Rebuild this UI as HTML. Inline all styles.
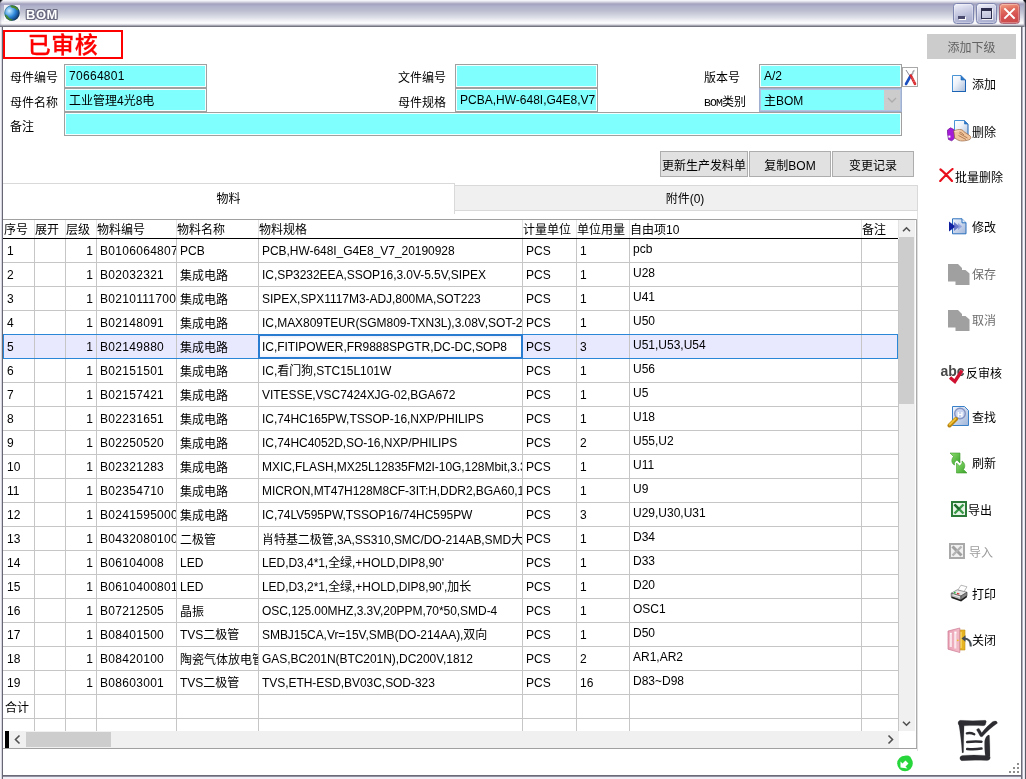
<!DOCTYPE html>
<html lang="zh"><head><meta charset="utf-8"><title>BOM</title>
<style>
*{box-sizing:border-box;margin:0;padding:0}
html,body{width:1026px;height:779px;overflow:hidden;background:#fff}
body{position:relative;font-family:"Liberation Sans","Noto Sans CJK SC",sans-serif;font-size:12px;color:#000;line-height:14px}
.abs,#win *{position:absolute}
#win{will-change:transform;position:absolute;left:0;top:0;width:1026px;height:779px;background:#fff;overflow:hidden}
#tbar{left:0;top:0;width:1026px;height:27px;background:linear-gradient(#f6f8fc 0px,#f2f4f9 .5px,#e0e0ea 1.5px,#c8c8d8 2.5px,#adadc6 3.5px,#a5a5c1 4.5px,#ababc7 5.5px,#b0b2cc 6.5px,#b8bace 9.5px,#c9cbd9 13.5px,#dddfe8 17.5px,#f0f0f5 20.5px,#fbfbfc 22.5px,#f6f6f9 23.5px,#dadae0 24.5px,#a6a6b2 25.5px,#74747e 26.5px,#74747e 27px)}
#bl{left:0;top:27px;width:3px;height:752px;background:linear-gradient(90deg,#f4f4f9 0,#f4f4f9 1px,#d4d4de 1px,#d4d4de 2px,#666674 2px,#666674 3px)}
#br{left:1021px;top:27px;width:5px;height:752px;background:linear-gradient(90deg,#6c6c78 0,#6c6c78 1px,#aeaebb 1px,#aeaebb 2px,#f6f6fc 2px,#f6f6fc 3px,#e6e6ee 3px,#e6e6ee 4px,#5c5c68 4px,#5c5c68 5px)}
#bb{left:0;top:775px;width:1026px;height:4px;background:linear-gradient(#6a6a78 0,#6a6a78 1px,#9090a0 1px,#9090a0 2px,#eeeef6 2px,#f2f2fa 4px)}
#ttl{left:26px;top:7px;font-family:"Liberation Sans",sans-serif;font-weight:bold;font-size:13px;line-height:16px;color:#fff;text-shadow:-1px 0 #6a6a80,1px 0 #6a6a80,0 -1px #6a6a80,0 1px #6a6a80,1px 1px #6a6a80,-1px -1px #6a6a80,1px -1px #6a6a80,-1px 1px #6a6a80;letter-spacing:0.5px}
.wb{top:3px;width:21px;height:21px;border-radius:3.500px;border:1px solid #7e86b0;background:linear-gradient(165deg,#f4f4fc 0,#d4d6ea 30%,#b6bad6 65%,#a6aacc);box-shadow:inset 0 0 0 1px rgba(255,255,255,.3)}
#stamp{-webkit-text-stroke:.3px #f00;left:3px;top:30px;width:120px;height:29px;border:2px solid #f00;color:#f00;font-size:23px;line-height:27px;text-align:center;font-weight:500;letter-spacing:.5px;font-family:"Liberation Sans","Noto Sans CJK SC",sans-serif}
.lb{height:14px;white-space:nowrap}
.fd{height:24px;border:1px solid #a0a0a0;background:#80ffff;box-shadow:inset 0 0 0 1px #f4ffff;padding:4px 0 0 4px;line-height:14px;white-space:nowrap;overflow:hidden}
.btn{height:26px;border:1px solid #adadad;background:#e1e1e1;text-align:center;line-height:14px;padding-top:7px;overflow:hidden;white-space:nowrap}
#grid{left:3px;top:219px;width:916px;height:533px;background:#fff;overflow:hidden}
.gh{left:0;top:0;width:895px;height:20px;border-top:1px solid #a0a0a0;border-bottom:1px solid #000}
.hc{top:3px;height:15px;white-space:nowrap;overflow:hidden}
.gr{left:0;width:895px;height:24px}
.c{top:4px;height:16px;line-height:16px;white-space:nowrap;overflow:hidden;padding-left:3px}
.c2{text-align:right;padding-right:3px}
.c8{top:2px}
.vl{top:20px;width:1px;height:492px;background:#c6c6c6}
.vh{top:1px;width:1px;height:18px;background:#e2e2e2}
.hl{left:0;width:895px;height:1px;background:#c6c6c6}
.rt{white-space:nowrap;height:14px}
.dis{color:#6d6d6d}
.selbg{left:0;top:116px;width:895px;height:23px;background:#e8e8ff}
.editbg{left:255px;top:115px;width:265px;height:25px;background:linear-gradient(#e4e4fa,#fff 5px,#fff 19px,#ececfc)}
.selbd{left:0;top:115px;width:895px;height:25px;border:1px solid #2a86d6}
.editbd{left:255px;top:115px;width:265px;height:25px;border:2px solid #2a7cd0}
.cj{margin-top:1px}
.c3{letter-spacing:.3px}
.c5{letter-spacing:-.05px}

</style></head>
<body>
<div id="win">
<div id="tbar"></div>
<div id="bb"></div><div id="bl"></div><div id="br"></div><i style="left:3px;top:750px;width:915px;height:1px;background:#dedede"></i>
<svg id="globe" style="left:4px;top:5px" width="16" height="16" viewBox="0 0 16 16"><defs><radialGradient id="gg" cx="32%" cy="36%" r="72%"><stop offset="0" stop-color="#d8efff"/><stop offset="0.22" stop-color="#8cc8f4"/><stop offset="0.55" stop-color="#2c86d8"/><stop offset="1" stop-color="#0a2f6a"/></radialGradient><clipPath id="gc"><circle cx="8" cy="8" r="7.700"/></clipPath></defs><rect width="16" height="16" fill="#fff" opacity=".8"/><circle cx="8" cy="8" r="7.700" fill="url(#gg)"/><g clip-path="url(#gc)" fill="#4e8c22"><path d="M6 0c3-.5 7 1 9 4l-2 1.500c-1.500-2-3-2.500-4-2.500-1.500 0-2.500-1-3-3z" opacity=".9"/><path d="M1 9.500c1.500 0 2.500 1 3.500 2.500s2.500 2 4 2.500l-1 2c-3.500 0-6.500-3-6.500-7z" opacity=".85"/></g><circle cx="8" cy="8" r="7.400" fill="none" stroke="#1a4a30" stroke-opacity=".45" stroke-width=".8"/></svg>
<div id="ttl">BOM</div>
<div class="wb" style="left:953px"><i style="left:5px;top:13px;width:7px;height:3px;background:#fff"></i><i style="left:4px;top:12px;width:7px;height:3px;background:#4c4c70"></i></div>
<div class="wb" style="left:976px"><i style="left:4px;top:4px;width:11px;height:11px;border:1px solid #2c2c4c;border-top-width:3px;background:rgba(255,255,255,.15);box-shadow:1px 1px 0 rgba(255,255,255,.8)"></i></div>
<div class="wb" style="left:999px;background:linear-gradient(170deg,#f4a88e 0,#e2705f 28%,#d65252 60%,#c84848);border-color:#b06878"><svg style="left:3px;top:3px" width="13" height="13" viewBox="0 0 13 13"><path d="M2 2l9 9M11 2l-9 9" stroke="#fff" stroke-width="1.900" stroke-linecap="square"/></svg></div>
<i style="left:1023px;top:0;width:3px;height:27px;background:linear-gradient(90deg,rgba(160,160,176,.2) 0,rgba(160,160,176,.2) 1px,#a0a0ae 1px,#a0a0ae 2px,#484856 2px)"></i><i style="left:1023px;top:0;width:3px;height:3px;background:linear-gradient(225deg,#101018 35%,rgba(0,0,0,0) 70%)"></i>
<i style="left:0;top:0;width:2px;height:27px;background:linear-gradient(90deg,rgba(120,120,140,.35),rgba(255,255,255,0))"></i><i style="left:0;top:0;width:3px;height:3px;background:linear-gradient(135deg,#101018 25%,rgba(0,0,0,0) 60%)"></i>
<div id="stamp">已审核</div>
<div class="lb" style="left:10px;top:71px">母件编号</div>
<div class="lb" style="left:10px;top:96px">母件名称</div>
<div class="lb" style="left:10px;top:120px">备注</div>
<div class="lb" style="left:398px;top:71px">文件编号</div>
<div class="lb" style="left:398px;top:96px">母件规格</div>
<div class="lb" style="left:704px;top:71px">版本号</div>
<div class="lb" style="left:704px;top:95px"><span style="position:static;font-family:'Liberation Mono',monospace;font-size:11.500px;letter-spacing:-.9px">BOM</span>类别</div>
<div class="fd" style="left:64px;top:64px;width:143px;letter-spacing:.3px">70664801</div>
<div class="fd" style="left:64px;top:88px;width:143px;padding-top:5px">工业管理4光8电</div>
<div class="fd" style="left:64px;top:112px;width:838px"></div>
<div class="fd" style="left:455px;top:64px;width:143px"></div>
<div class="fd" style="left:455px;top:88px;width:143px">PCBA,HW-648I,G4E8,V7</div>
<div class="fd" style="left:759px;top:64px;width:143px">A/2</div>
<div class="fd" style="left:759px;top:88px;width:143px;border-color:#9fb0d0;box-shadow:inset 0 0 0 1px #b4c4e0;padding-top:5px">主BOM</div>
<div style="left:884px;top:90px;width:16px;height:20px;background:#ccc"></div><svg style="left:887px;top:97px" width="10" height="7" viewBox="0 0 10 7"><path d="M1 1l4 4 4-4" fill="none" stroke="#acacac" stroke-width="1.300"/></svg>
<div style="left:902px;top:67px;width:16px;height:20px;border:1px solid #a8a8a8;background:#fff"></div>
<svg style="left:903px;top:68px" width="15" height="18" viewBox="0 0 15 18"><path d="M3 2l4.500 7" stroke="#8a8a9a" stroke-width="1"/><path d="M7.500 8L3 16" stroke="#1c4fc0" stroke-width="2.600" stroke-linecap="round"/><path d="M11.500 2.500c-1.500.5-2 2-1.500 3.200" stroke="#a0a0a8" stroke-width="1.400" fill="none"/><path d="M9.500 5.500l-1.500 2" stroke="#909098" stroke-width="1.400"/><path d="M7.800 7.500L12 15.800" stroke="#d8282c" stroke-width="2.600" stroke-linecap="round"/><path d="M9 9.500l2.800 5.800" stroke="#f4b0b0" stroke-width=".7" stroke-dasharray="1 1"/></svg>
<div class="btn" style="left:660px;top:151px;width:88px">更新生产发料单</div>
<div class="btn" style="left:749px;top:151px;width:82px">复制BOM</div>
<div class="btn" style="left:832px;top:151px;width:82px">变更记录</div>
<div id="tab1" style="left:3px;top:183px;width:452px;height:31px;border-top:1px solid #d9d9d9;border-right:1px solid #d9d9d9;text-align:center;line-height:31px">物料</div>
<div id="tab2" style="left:455px;top:185px;width:463px;height:26px;background:#f0f0f0;text-align:center;line-height:27px;border:1px solid #d9d9d9;border-left:none;padding-right:2px">附件(0)</div><i style="left:917px;top:211px;width:1px;height:8px;background:#e2e2e2"></i>
<div id="grid">
<div class="selbg"></div><div class="editbg"></div><div class="gh"><span class="hc" style="left:1px;width:30px">序号</span><span class="hc" style="left:32px;width:30px">展开</span><span class="hc" style="left:63px;width:30px">层级</span><span class="hc" style="left:94px;width:79px">物料编号</span><span class="hc" style="left:174px;width:81px">物料名称</span><span class="hc" style="left:256px;width:263px">物料规格</span><span class="hc" style="left:520px;width:53px">计量单位</span><span class="hc" style="left:574px;width:52px">单位用量</span><span class="hc" style="left:627px;width:231px">自由项10</span><span class="hc" style="left:859px;width:36px">备注</span></div>
<div class="gr" style="top:20px"><span class="c c0" style="left:1px;width:30px">1</span><span class="c c1" style="left:32px;width:30px"></span><span class="c c2" style="left:63px;width:30px">1</span><span class="c c3" style="left:94px;width:79px">B0106064807</span><span class="c c4" style="left:174px;width:81px">PCB</span><span class="c c5" style="left:256px;width:263px">PCB,HW-648I_G4E8_V7_20190928</span><span class="c c6" style="left:520px;width:53px">PCS</span><span class="c c7" style="left:574px;width:52px">1</span><span class="c c8" style="left:627px;width:231px">pcb</span><span class="c c9" style="left:859px;width:36px"></span></div>
<div class="gr" style="top:44px"><span class="c c0" style="left:1px;width:30px">2</span><span class="c c1" style="left:32px;width:30px"></span><span class="c c2" style="left:63px;width:30px">1</span><span class="c c3" style="left:94px;width:79px">B02032321</span><span class="c c4 cj" style="left:174px;width:81px">集成电路</span><span class="c c5" style="left:256px;width:263px">IC,SP3232EEA,SSOP16,3.0V-5.5V,SIPEX</span><span class="c c6" style="left:520px;width:53px">PCS</span><span class="c c7" style="left:574px;width:52px">1</span><span class="c c8" style="left:627px;width:231px">U28</span><span class="c c9" style="left:859px;width:36px"></span></div>
<div class="gr" style="top:68px"><span class="c c0" style="left:1px;width:30px">3</span><span class="c c1" style="left:32px;width:30px"></span><span class="c c2" style="left:63px;width:30px">1</span><span class="c c3" style="left:94px;width:79px">B0210111700</span><span class="c c4 cj" style="left:174px;width:81px">集成电路</span><span class="c c5" style="left:256px;width:263px">SIPEX,SPX1117M3-ADJ,800MA,SOT223</span><span class="c c6" style="left:520px;width:53px">PCS</span><span class="c c7" style="left:574px;width:52px">1</span><span class="c c8" style="left:627px;width:231px">U41</span><span class="c c9" style="left:859px;width:36px"></span></div>
<div class="gr" style="top:92px"><span class="c c0" style="left:1px;width:30px">4</span><span class="c c1" style="left:32px;width:30px"></span><span class="c c2" style="left:63px;width:30px">1</span><span class="c c3" style="left:94px;width:79px">B02148091</span><span class="c c4 cj" style="left:174px;width:81px">集成电路</span><span class="c c5" style="left:256px;width:263px">IC,MAX809TEUR(SGM809-TXN3L),3.08V,SOT-23</span><span class="c c6" style="left:520px;width:53px">PCS</span><span class="c c7" style="left:574px;width:52px">1</span><span class="c c8" style="left:627px;width:231px">U50</span><span class="c c9" style="left:859px;width:36px"></span></div>
<div class="gr" style="top:116px"><span class="c c0" style="left:1px;width:30px">5</span><span class="c c1" style="left:32px;width:30px"></span><span class="c c2" style="left:63px;width:30px">1</span><span class="c c3" style="left:94px;width:79px">B02149880</span><span class="c c4 cj" style="left:174px;width:81px">集成电路</span><span class="c c5" style="left:256px;width:263px">IC,FITIPOWER,FR9888SPGTR,DC-DC,SOP8</span><span class="c c6" style="left:520px;width:53px">PCS</span><span class="c c7" style="left:574px;width:52px">3</span><span class="c c8" style="left:627px;width:231px">U51,U53,U54</span><span class="c c9" style="left:859px;width:36px"></span></div>
<div class="gr" style="top:140px"><span class="c c0" style="left:1px;width:30px">6</span><span class="c c1" style="left:32px;width:30px"></span><span class="c c2" style="left:63px;width:30px">1</span><span class="c c3" style="left:94px;width:79px">B02151501</span><span class="c c4 cj" style="left:174px;width:81px">集成电路</span><span class="c c5" style="left:256px;width:263px">IC,看门狗,STC15L101W</span><span class="c c6" style="left:520px;width:53px">PCS</span><span class="c c7" style="left:574px;width:52px">1</span><span class="c c8" style="left:627px;width:231px">U56</span><span class="c c9" style="left:859px;width:36px"></span></div>
<div class="gr" style="top:164px"><span class="c c0" style="left:1px;width:30px">7</span><span class="c c1" style="left:32px;width:30px"></span><span class="c c2" style="left:63px;width:30px">1</span><span class="c c3" style="left:94px;width:79px">B02157421</span><span class="c c4 cj" style="left:174px;width:81px">集成电路</span><span class="c c5" style="left:256px;width:263px">VITESSE,VSC7424XJG-02,BGA672</span><span class="c c6" style="left:520px;width:53px">PCS</span><span class="c c7" style="left:574px;width:52px">1</span><span class="c c8" style="left:627px;width:231px">U5</span><span class="c c9" style="left:859px;width:36px"></span></div>
<div class="gr" style="top:188px"><span class="c c0" style="left:1px;width:30px">8</span><span class="c c1" style="left:32px;width:30px"></span><span class="c c2" style="left:63px;width:30px">1</span><span class="c c3" style="left:94px;width:79px">B02231651</span><span class="c c4 cj" style="left:174px;width:81px">集成电路</span><span class="c c5" style="left:256px;width:263px">IC,74HC165PW,TSSOP-16,NXP/PHILIPS</span><span class="c c6" style="left:520px;width:53px">PCS</span><span class="c c7" style="left:574px;width:52px">1</span><span class="c c8" style="left:627px;width:231px">U18</span><span class="c c9" style="left:859px;width:36px"></span></div>
<div class="gr" style="top:212px"><span class="c c0" style="left:1px;width:30px">9</span><span class="c c1" style="left:32px;width:30px"></span><span class="c c2" style="left:63px;width:30px">1</span><span class="c c3" style="left:94px;width:79px">B02250520</span><span class="c c4 cj" style="left:174px;width:81px">集成电路</span><span class="c c5" style="left:256px;width:263px">IC,74HC4052D,SO-16,NXP/PHILIPS</span><span class="c c6" style="left:520px;width:53px">PCS</span><span class="c c7" style="left:574px;width:52px">2</span><span class="c c8" style="left:627px;width:231px">U55,U2</span><span class="c c9" style="left:859px;width:36px"></span></div>
<div class="gr" style="top:236px"><span class="c c0" style="left:1px;width:30px">10</span><span class="c c1" style="left:32px;width:30px"></span><span class="c c2" style="left:63px;width:30px">1</span><span class="c c3" style="left:94px;width:79px">B02321283</span><span class="c c4 cj" style="left:174px;width:81px">集成电路</span><span class="c c5" style="left:256px;width:263px">MXIC,FLASH,MX25L12835FM2I-10G,128Mbit,3.3V</span><span class="c c6" style="left:520px;width:53px">PCS</span><span class="c c7" style="left:574px;width:52px">1</span><span class="c c8" style="left:627px;width:231px">U11</span><span class="c c9" style="left:859px;width:36px"></span></div>
<div class="gr" style="top:260px"><span class="c c0" style="left:1px;width:30px">11</span><span class="c c1" style="left:32px;width:30px"></span><span class="c c2" style="left:63px;width:30px">1</span><span class="c c3" style="left:94px;width:79px">B02354710</span><span class="c c4 cj" style="left:174px;width:81px">集成电路</span><span class="c c5" style="left:256px;width:263px">MICRON,MT47H128M8CF-3IT:H,DDR2,BGA60,1Gb</span><span class="c c6" style="left:520px;width:53px">PCS</span><span class="c c7" style="left:574px;width:52px">1</span><span class="c c8" style="left:627px;width:231px">U9</span><span class="c c9" style="left:859px;width:36px"></span></div>
<div class="gr" style="top:284px"><span class="c c0" style="left:1px;width:30px">12</span><span class="c c1" style="left:32px;width:30px"></span><span class="c c2" style="left:63px;width:30px">1</span><span class="c c3" style="left:94px;width:79px">B0241595000</span><span class="c c4 cj" style="left:174px;width:81px">集成电路</span><span class="c c5" style="left:256px;width:263px">IC,74LV595PW,TSSOP16/74HC595PW</span><span class="c c6" style="left:520px;width:53px">PCS</span><span class="c c7" style="left:574px;width:52px">3</span><span class="c c8" style="left:627px;width:231px">U29,U30,U31</span><span class="c c9" style="left:859px;width:36px"></span></div>
<div class="gr" style="top:308px"><span class="c c0" style="left:1px;width:30px">13</span><span class="c c1" style="left:32px;width:30px"></span><span class="c c2" style="left:63px;width:30px">1</span><span class="c c3" style="left:94px;width:79px">B0432080100</span><span class="c c4 cj" style="left:174px;width:81px">二极管</span><span class="c c5 cj" style="left:256px;width:263px">肖特基二极管,3A,SS310,SMC/DO-214AB,SMD大</span><span class="c c6" style="left:520px;width:53px">PCS</span><span class="c c7" style="left:574px;width:52px">1</span><span class="c c8" style="left:627px;width:231px">D34</span><span class="c c9" style="left:859px;width:36px"></span></div>
<div class="gr" style="top:332px"><span class="c c0" style="left:1px;width:30px">14</span><span class="c c1" style="left:32px;width:30px"></span><span class="c c2" style="left:63px;width:30px">1</span><span class="c c3" style="left:94px;width:79px">B06104008</span><span class="c c4" style="left:174px;width:81px">LED</span><span class="c c5" style="left:256px;width:263px">LED,D3,4*1,全绿,+HOLD,DIP8,90'</span><span class="c c6" style="left:520px;width:53px">PCS</span><span class="c c7" style="left:574px;width:52px">1</span><span class="c c8" style="left:627px;width:231px">D33</span><span class="c c9" style="left:859px;width:36px"></span></div>
<div class="gr" style="top:356px"><span class="c c0" style="left:1px;width:30px">15</span><span class="c c1" style="left:32px;width:30px"></span><span class="c c2" style="left:63px;width:30px">1</span><span class="c c3" style="left:94px;width:79px">B0610400801</span><span class="c c4" style="left:174px;width:81px">LED</span><span class="c c5" style="left:256px;width:263px">LED,D3,2*1,全绿,+HOLD,DIP8,90',加长</span><span class="c c6" style="left:520px;width:53px">PCS</span><span class="c c7" style="left:574px;width:52px">1</span><span class="c c8" style="left:627px;width:231px">D20</span><span class="c c9" style="left:859px;width:36px"></span></div>
<div class="gr" style="top:380px"><span class="c c0" style="left:1px;width:30px">16</span><span class="c c1" style="left:32px;width:30px"></span><span class="c c2" style="left:63px;width:30px">1</span><span class="c c3" style="left:94px;width:79px">B07212505</span><span class="c c4 cj" style="left:174px;width:81px">晶振</span><span class="c c5" style="left:256px;width:263px">OSC,125.00MHZ,3.3V,20PPM,70*50,SMD-4</span><span class="c c6" style="left:520px;width:53px">PCS</span><span class="c c7" style="left:574px;width:52px">1</span><span class="c c8" style="left:627px;width:231px">OSC1</span><span class="c c9" style="left:859px;width:36px"></span></div>
<div class="gr" style="top:404px"><span class="c c0" style="left:1px;width:30px">17</span><span class="c c1" style="left:32px;width:30px"></span><span class="c c2" style="left:63px;width:30px">1</span><span class="c c3" style="left:94px;width:79px">B08401500</span><span class="c c4" style="left:174px;width:81px">TVS二极管</span><span class="c c5" style="left:256px;width:263px">SMBJ15CA,Vr=15V,SMB(DO-214AA),双向</span><span class="c c6" style="left:520px;width:53px">PCS</span><span class="c c7" style="left:574px;width:52px">1</span><span class="c c8" style="left:627px;width:231px">D50</span><span class="c c9" style="left:859px;width:36px"></span></div>
<div class="gr" style="top:428px"><span class="c c0" style="left:1px;width:30px">18</span><span class="c c1" style="left:32px;width:30px"></span><span class="c c2" style="left:63px;width:30px">1</span><span class="c c3" style="left:94px;width:79px">B08420100</span><span class="c c4 cj" style="left:174px;width:81px">陶瓷气体放电管</span><span class="c c5" style="left:256px;width:263px">GAS,BC201N(BTC201N),DC200V,1812</span><span class="c c6" style="left:520px;width:53px">PCS</span><span class="c c7" style="left:574px;width:52px">2</span><span class="c c8" style="left:627px;width:231px">AR1,AR2</span><span class="c c9" style="left:859px;width:36px"></span></div>
<div class="gr" style="top:452px"><span class="c c0" style="left:1px;width:30px">19</span><span class="c c1" style="left:32px;width:30px"></span><span class="c c2" style="left:63px;width:30px">1</span><span class="c c3" style="left:94px;width:79px">B08603001</span><span class="c c4" style="left:174px;width:81px">TVS二极管</span><span class="c c5" style="left:256px;width:263px">TVS,ETH-ESD,BV03C,SOD-323</span><span class="c c6" style="left:520px;width:53px">PCS</span><span class="c c7" style="left:574px;width:52px">16</span><span class="c c8" style="left:627px;width:231px">D83~D98</span><span class="c c9" style="left:859px;width:36px"></span></div>
<div class="gr" style="top:476px"><span class="c c0 cj" style="left:-1px;width:32px">合计</span></div>
<i class="vl" style="left:31px"></i><i class="vh" style="left:31px"></i><i class="vl" style="left:62px"></i><i class="vh" style="left:62px"></i><i class="vl" style="left:93px"></i><i class="vh" style="left:93px"></i><i class="vl" style="left:173px"></i><i class="vh" style="left:173px"></i><i class="vl" style="left:255px"></i><i class="vh" style="left:255px"></i><i class="vl" style="left:519px"></i><i class="vh" style="left:519px"></i><i class="vl" style="left:573px"></i><i class="vh" style="left:573px"></i><i class="vl" style="left:626px"></i><i class="vh" style="left:626px"></i><i class="vl" style="left:858px"></i><i class="vh" style="left:858px"></i><i class="vl" style="left:895px"></i><i class="vh" style="left:895px"></i>
<i class="hl" style="top:43px"></i><i class="hl" style="top:67px"></i><i class="hl" style="top:91px"></i><i class="hl" style="top:115px"></i><i class="hl" style="top:139px"></i><i class="hl" style="top:163px"></i><i class="hl" style="top:187px"></i><i class="hl" style="top:211px"></i><i class="hl" style="top:235px"></i><i class="hl" style="top:259px"></i><i class="hl" style="top:283px"></i><i class="hl" style="top:307px"></i><i class="hl" style="top:331px"></i><i class="hl" style="top:355px"></i><i class="hl" style="top:379px"></i><i class="hl" style="top:403px"></i><i class="hl" style="top:427px"></i><i class="hl" style="top:451px"></i><i class="hl" style="top:475px"></i><i class="hl" style="top:499px"></i>
<div class="selbd"></div><div class="editbd"></div>
<div id="vsb" style="left:896px;top:1px;width:16px;height:511px;background:#f0f0f0"></div>
<div style="left:896px;top:18px;width:15px;height:167px;background:#cdcdcd"></div>
<svg style="left:898px;top:6px" width="11" height="8" viewBox="0 0 11 8"><path d="M2 6.300l3.500-3.500 3.500 3.500" fill="none" stroke="#505050" stroke-width="1.600"/></svg>
<svg style="left:898px;top:501px" width="11" height="8" viewBox="0 0 11 8"><path d="M2 1.700l3.500 3.500 3.500-3.500" fill="none" stroke="#505050" stroke-width="1.600"/></svg>
<div id="hsb" style="left:6px;top:512px;width:890px;height:17px;background:#f0f0f0"></div>
<div style="left:2px;top:512px;width:4px;height:17px;background:#000"></div>
<div style="left:23px;top:513px;width:85px;height:15px;background:#cdcdcd"></div>
<svg style="left:10px;top:515px" width="8" height="11" viewBox="0 0 8 11"><path d="M6.500 1.500l-4 4 4 4" fill="none" stroke="#505050" stroke-width="1.600"/></svg>
<svg style="left:884px;top:515px" width="8" height="11" viewBox="0 0 8 11"><path d="M1.500 1.500l4 4-4 4" fill="none" stroke="#505050" stroke-width="1.600"/></svg>
<i style="left:0;top:0;width:914px;height:1px;background:#a0a0a0"></i><i style="left:913px;top:0;width:1px;height:530px;background:#ababab"></i><i style="left:914px;top:0;width:1px;height:532px;background:#dedede"></i><i style="left:0;top:529px;width:914px;height:1px;background:#a0a0a0"></i>
</div>
<div class="btn dis" style="left:927px;top:34px;width:89px;height:25px;background:#ccc;border-color:#ccc;padding-top:6px;color:#626262">添加下级</div>
<!-- add -->
<svg style="left:951px;top:74px" width="16" height="19" viewBox="0 0 16 19"><defs><linearGradient id="dg" x1="0" y1="0" x2="1" y2="1"><stop offset="0" stop-color="#ffffff"/><stop offset="0.4" stop-color="#eef3fa"/><stop offset="1" stop-color="#a9bcd8"/></linearGradient></defs><path d="M1.500 1.500h8.500l4.500 4.500v11.500h-13z" fill="url(#dg)"/><path d="M1.500 17.500v-16h8.500" fill="none" stroke="#4a94d6"/><path d="M1 17.500h14M14.500 17.500v-11.500" fill="none" stroke="#1c62b4"/><path d="M10 1.500v4.500h4.500z" fill="#2b7ccc" stroke="#1c62b4" stroke-width=".6"/></svg>
<div class="rt" style="left:972px;top:78px">添加</div>
<!-- delete -->
<svg style="left:946px;top:119px" width="26" height="24" viewBox="0 0 26 24"><path d="M8.500 1.500h10l3.500 3.500v13.500h-13.500z" fill="url(#dg)"/><path d="M8.500 18v-16.500h10" fill="none" stroke="#4a94d6"/><path d="M22 18.500v-13.500" fill="none" stroke="#1c62b4"/><path d="M18.500 1.500v3.500h3.500z" fill="#2b7ccc" stroke="#1c62b4" stroke-width=".6"/><path d="M1.500 11l3-2.200 3.300 1.700 1 8.500-3 2.800-3.300-1.300-1-6z" fill="#a41cd8" stroke="#6a1090" stroke-width=".7"/><rect x="2.400" y="16.600" width="2" height="2" fill="#fff"/><path d="M7.800 11.800c2-.8 5-1.400 7.500-1.200 1.200.3 2 1 2.500 2l6.200 4.200c1 1 1 2.600 0 3.500-1.500 1-3.500 1.200-5.500 1.500-2.500.4-5 .2-7-1l-2.800-1.800z" fill="#f0c49c" stroke="#9a6844" stroke-width=".7"/><path d="M13 12.500c2 .8 3.500 2 5 3.500M13.500 14.500l8 4.500M12.500 16.500l7.500 4" stroke="#a06a40" stroke-width=".8" fill="none"/><path d="M8.500 12.500c2-.5 4-.8 6-.5" stroke="#fbe4cc" stroke-width="1" fill="none"/></svg>
<div class="rt" style="left:972px;top:126px">删除</div>
<!-- batch delete -->
<svg style="left:939px;top:168px" width="15" height="14" viewBox="0 0 15 14"><path d="M1.5 1.5C5 4 9 8.5 13 13M13.5 1C9 4.5 5 9 1.2 13" stroke="#e8101c" stroke-width="2.2" stroke-linecap="round" fill="none"/></svg>
<div class="rt" style="left:955px;top:171px">批量删除</div>
<!-- modify -->
<svg style="left:948px;top:218px" width="19" height="17" viewBox="0 0 19 17"><defs><linearGradient id="dg2" x1="0" y1="0" x2="1" y2="1"><stop offset="0" stop-color="#f4f8ff"/><stop offset="1" stop-color="#9fb4d8"/></linearGradient></defs><path d="M4.5 .8h9.5l4 4v11h-13.5z" fill="url(#dg2)" stroke="#2a6fbd"/><path d="M14 .8v4h4" fill="#e6eefa" stroke="#2a6fbd"/><path d="M1 3.5l6.5 5-6.5 5z" fill="#1020a0"/><path d="M6 4l5.5 4.5L6 13z" fill="#5060c0" opacity=".8"/><path d="M10 5l4 3.5-4 3.5z" fill="#8090d8" opacity=".7"/></svg>
<div class="rt" style="left:972px;top:221px">修改</div>
<!-- save (disabled) -->
<svg style="left:947px;top:263px" width="24" height="23" viewBox="0 0 24 23"><path d="M1 1h10l4 4v13.500h-14z" fill="#a0a0a0"/><path d="M8.500 7h10l4 3.500v11.500h-14z" fill="#a0a0a0"/></svg>
<div class="rt dis" style="left:972px;top:268px">保存</div>
<svg style="left:947px;top:309px" width="24" height="23" viewBox="0 0 24 23"><path d="M1 1h10l4 4v13.500h-14z" fill="#a0a0a0"/><path d="M8.500 7h10l4 3.500v11.500h-14z" fill="#a0a0a0"/></svg>
<div class="rt dis" style="left:972px;top:314px">取消</div>
<!-- unaudit -->
<svg style="left:940px;top:362px" width="27" height="22" viewBox="0 0 27 22"><text x="0.500" y="14" font-family="Liberation Sans,sans-serif" font-weight="bold" font-size="14" fill="#484848">abc</text><path d="M10 15.500l4.800 4L22 8.500" stroke="#d01030" stroke-width="3.300" fill="none" stroke-linejoin="miter"/></svg>
<div class="rt" style="left:966px;top:367px">反审核</div>
<!-- find -->
<svg style="left:946px;top:405px" width="24" height="23" viewBox="0 0 24 23"><path d="M6.500 1.500h12l4 4v15h-16z" fill="url(#dg2)" stroke="#3a80c8"/><circle cx="14" cy="8.600" r="5.300" fill="#c8d4f0" stroke="#8090c0" stroke-width="1.400" opacity=".95"/><text x="11.300" y="11.500" font-family="Liberation Sans,sans-serif" font-weight="bold" font-size="8" fill="#fff">H</text><path d="M10 14L3.500 20.500" stroke="#b88410" stroke-width="4" stroke-linecap="round"/><path d="M9.600 13.600L3.600 19.600" stroke="#f2c436" stroke-width="1.800" stroke-linecap="round"/></svg>
<div class="rt" style="left:972px;top:411px">查找</div>
<!-- refresh -->
<svg style="left:949px;top:452px" width="19" height="22" viewBox="0 0 19 22"><defs><linearGradient id="gr1" x1="0" y1="0" x2="1" y2="1"><stop offset="0" stop-color="#8fe070"/><stop offset="1" stop-color="#38a028"/></linearGradient></defs><path d="M1 1h10v10l-3-3c-2 1-3 3-2.500 5C3 12 1.500 8 4.500 4.500z" fill="url(#gr1)" stroke="#3c9a2c" stroke-width=".6"/><path d="M18 21h-10.500v-10l3 3c2-1 3-3 2.500-5 2.500 1.500 4 5 1.500 8.500z" fill="url(#gr1)" stroke="#3c9a2c" stroke-width=".6"/></svg>
<div class="rt" style="left:972px;top:457px">刷新</div>
<!-- export -->
<svg style="left:951px;top:501px" width="16" height="16" viewBox="0 0 16 16"><rect x="1" y="1" width="14" height="14" fill="#e8f4e8" stroke="#2c7a38" stroke-width="2"/><path d="M3.500 3.500l9 9M12.500 3.500l-9 9" stroke="#3a9a48" stroke-width="2.400"/><path d="M3.500 3.500l5 5" stroke="#1e6a2c" stroke-width="2.400"/></svg>
<div class="rt" style="left:968px;top:504px">导出</div>
<!-- import (disabled) -->
<svg style="left:949px;top:543px" width="16" height="16" viewBox="0 0 16 16"><rect x="1" y="1" width="14" height="14" fill="#f0f0f0" stroke="#a9a9a9" stroke-width="2"/><path d="M3.500 3.500l9 9" stroke="#a0a0a0" stroke-width="3"/><path d="M12.500 3.500l-9 9" stroke="#b4b4b4" stroke-width="2.400"/></svg>
<div class="rt" style="left:969px;top:546px;color:#9c9c9c">导入</div>
<!-- print -->
<svg style="left:950px;top:584px" width="18" height="18" viewBox="0 0 18 18"><path d="M7.500 6.500L11 1.200l6 1.600-3.200 5.200z" fill="#fff" stroke="#9a9a9a" stroke-width=".7"/><path d="M1.200 9.200L7.200 5.800 17 8.200 11 12z" fill="#e6e6e6" stroke="#777" stroke-width=".7"/><path d="M1.200 9.200L11 12v4.200L1.200 12.800z" fill="#bdbdbd" stroke="#555" stroke-width=".7"/><path d="M11 12l6-3.800v3.600L11 16.200z" fill="#868686" stroke="#444" stroke-width=".7"/><path d="M1.500 13.300l9.500 3.400 5.800-4.300" fill="none" stroke="#1c1c1c" stroke-width="1.500"/><path d="M3 10.800l7 2.200" stroke="#fff" stroke-width=".8"/><circle cx="4.800" cy="8.700" r=".9" fill="#28b840"/><path d="M7 9.300l2.400.7" stroke="#e02828" stroke-width="1.200"/></svg>
<div class="rt" style="left:972px;top:588px">打印</div>
<!-- close -->
<svg style="left:947px;top:627px" width="25" height="26" viewBox="0 0 25 26"><defs><linearGradient id="dr" x1="0" y1="0" x2="1" y2="0"><stop offset="0" stop-color="#e9a0b4"/><stop offset="1" stop-color="#f3bcc8"/></linearGradient></defs><path d="M12.500 3h5.500v20h-5.500z" fill="#e6b422" stroke="#c09018" stroke-width=".6"/><path d="M14 5v16" stroke="#f6d860" stroke-width="1.600"/><path d="M1 4l11.800-3v24.500l-11.800-3.300z" fill="url(#dr)" stroke="#cc7a94" stroke-width=".7"/><path d="M3.800 8v12M8.300 7v14.500" stroke="#fbe6ec" stroke-width="2.200"/><rect x="2.800" y="5.800" width="2" height="2" fill="#fff"/><rect x="7.300" y="4.600" width="2.200" height="2.200" fill="#fff"/><circle cx="10.800" cy="13.300" r=".9" fill="#f0c020"/><path d="M23.800 19.500c.2-5-2.300-8-6.300-8" fill="none" stroke="#444c54" stroke-width="2"/><path d="M14.500 11.500l4-3.200v6.400z" fill="#444c54"/></svg>
<div class="rt" style="left:972px;top:634px">关闭</div>
<!-- checklist -->
<svg style="left:955px;top:716px" width="46" height="48" viewBox="0 0 46 48"><g fill="#2c2c31" stroke="#2c2c31" stroke-width=".2" stroke-linejoin="round"><path d="M3.300 5.800C4 4.600 5 4.300 6 4.300c8 .5 16 .5 23.600 0 1.200 0 1.900.6 1.700 1.500l-.9 3c-.4.800-1.600 1-3.200 1-6-.4-11.500-.4-17.300 0-2.500.2-4.800 0-5.800-.5-.9-.8-1.200-2.400-.8-3.500z"/><path d="M3.500 6.500l5.600 3.200c-.3 9-.5 18-.5 26.700l-1.500.5c-.6-10-1.800-20.400-3.600-30.400z"/><path d="M5 41.300c.5-1 1.500-1.700 2.500-1.800 7.500-.7 15.500-.7 23 0 2 .2 3.700.5 4.500 1 .5 1 .2 2.300-.5 3-.7.700-1.600 1.100-2.600 1.100-8-.6-16.500-.6-24.500.1-1 0-1.800-.5-2.200-1.300-.4-.7-.5-1.400-.2-2.100z"/><path d="M34.100 19.100c.3.200.4.500.4.900.3 7 .5 14 .5 20.500l-4.600.3c-.6-5-.9-10-.8-14.300 0-2 .6-4 1.700-5.700.8-1 1.900-1.700 2.800-1.700z"/><path d="M21.400 13.700c.7-.8 1.700-1.400 2.500-1.500 1 1.500 2 3 2.800 4.500 3.500-4.300 7.200-8 11.100-11.100 1.100-.6 2.300-.8 3.300-.5.800.5 1.300 1.300 1.300 2.100-5.500 3.800-10.600 8.400-15.200 13.600-.7.100-1.500-.1-2.100-.5-1.100-2.200-2.300-4.400-3.700-6.600z"/></g><g fill="none" stroke="#2c2c30" stroke-linecap="round"><path d="M11.800 17.300c2.500-.6 5.200-.2 7.500 1" stroke-width="2.300"/><path d="M12.200 26c4.800-.7 9.600-.8 14.300-.3" stroke-width="2.500"/><path d="M12.200 33c4.800.4 9.600.3 14.300-.4" stroke-width="2.500"/></g></svg>
<!-- green home -->
<svg style="left:896px;top:754px" width="18" height="18" viewBox="0 0 18 18"><circle cx="9" cy="9.500" r="7.800" fill="#27d63a"/><circle cx="11" cy="6" r="4.500" fill="#27d63a"/><path d="M4.500 13.500v-6l2 2 3-3 3 3-3 3 2 2z" fill="#fff" transform="rotate(0 9 9)"/></svg>
<!-- grip -->
<svg style="left:1009px;top:763px" width="12" height="12" viewBox="0 0 12 12" fill="#8e8e8e"><rect x="8" y="0" width="2" height="2"/><rect x="4" y="4" width="2" height="2"/><rect x="8" y="4" width="2" height="2"/><rect x="0" y="8" width="2" height="2"/><rect x="4" y="8" width="2" height="2"/><rect x="8" y="8" width="2" height="2"/></svg>
</div>
</body></html>
